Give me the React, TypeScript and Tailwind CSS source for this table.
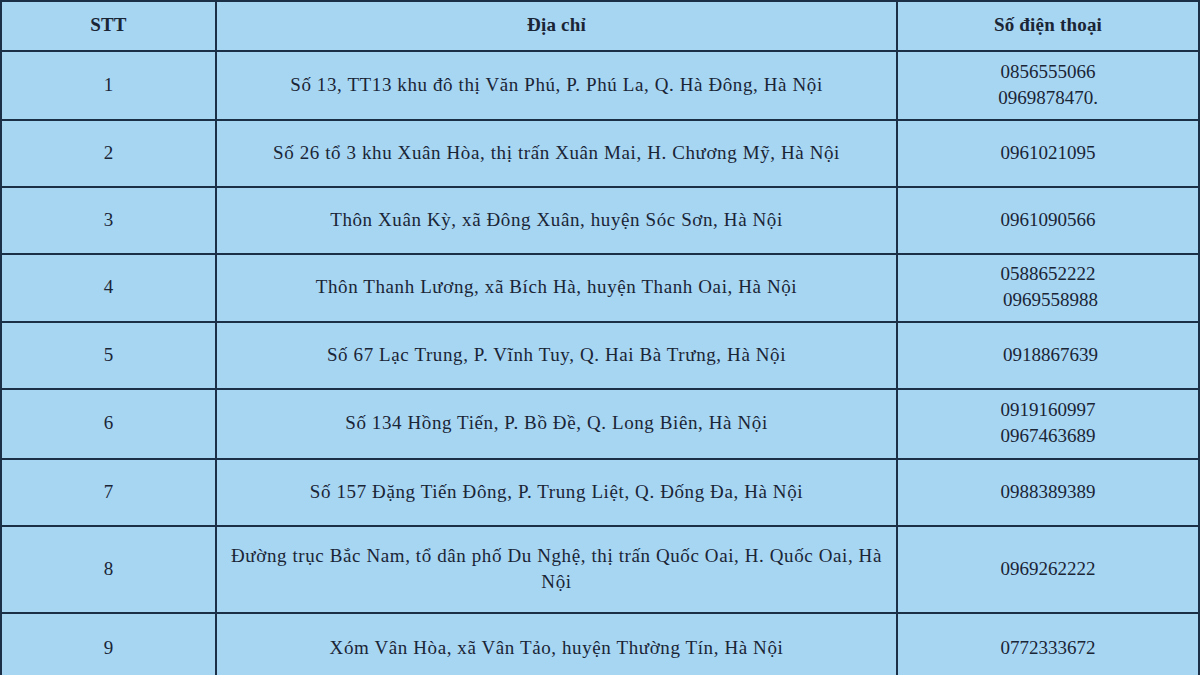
import React from "react";

const rows: { n: string; addr: React.ReactNode; phone: string[]; h: string }[] = [
  { n: "1", addr: "Số 13, TT13 khu đô thị Văn Phú, P. Phú La, Q. Hà Đông, Hà Nội", phone: ["0856555066", "0969878470."], h: "h-[69px]" },
  { n: "2", addr: "Số 26 tổ 3 khu Xuân Hòa, thị trấn Xuân Mai, H. Chương Mỹ, Hà Nội", phone: ["0961021095"], h: "h-[67px]" },
  { n: "3", addr: "Thôn Xuân Kỳ, xã Đông Xuân, huyện Sóc Sơn, Hà Nội", phone: ["0961090566"], h: "h-[67px]" },
  { n: "4", addr: "Thôn Thanh Lương, xã Bích Hà, huyện Thanh Oai, Hà Nội", phone: ["0588652222", "\u00a00969558988"], h: "h-[68px]" },
  { n: "5", addr: "Số 67 Lạc Trung, P. Vĩnh Tuy, Q. Hai Bà Trưng, Hà Nội", phone: ["\u00a00918867639"], h: "h-[67px]" },
  { n: "6", addr: "Số 134 Hồng Tiến, P. Bồ Đề, Q. Long Biên, Hà Nội", phone: ["0919160997", "0967463689"], h: "h-[70px]" },
  { n: "7", addr: "Số 157 Đặng Tiến Đông, P. Trung Liệt, Q. Đống Đa, Hà Nội", phone: ["0988389389"], h: "h-[67px]" },
  { n: "8", addr: "Đường trục Bắc Nam, tổ dân phố Du Nghệ, thị trấn Quốc Oai, H. Quốc Oai, Hà Nội", phone: ["0969262222"], h: "h-[87px]" },
  { n: "9", addr: "Xóm Vân Hòa, xã Vân Tảo, huyện Thường Tín, Hà Nội", phone: ["0772333672"], h: "h-[72px]" },
];

export default function App() {
  return (
    <div className="w-[1200px] h-[675px] overflow-hidden bg-[#a7d6f3] text-[#1a2536] text-[19px] leading-[26px]" style={{ fontFamily: '"Liberation Serif", "Times New Roman", serif' }}>
      <div className="flex flex-col border-l-2 border-r-2 border-t-2 border-[#1b3046] w-[1200px]">
        <div className="flex h-[50px] shrink-0 border-b-2 border-[#1b3046] font-bold tracking-[0.2px]">
          <div className="w-[215px] flex items-center justify-center border-r-2 border-[#1b3046] pb-[2px]">STT</div>
          <div className="w-[681px] flex items-center justify-center border-r-2 border-[#1b3046] pb-[2px]">Địa chỉ</div>
          <div className="flex-1 flex items-center justify-center pb-[2px]">Số điện thoại</div>
        </div>
        {rows.map((r) => (
          <div key={r.n} className={`flex ${r.h} border-b-2 border-[#1b3046] shrink-0`}>
            <div className="w-[215px] flex items-center justify-center border-r-2 border-[#1b3046] pb-[2px]">{r.n}</div>
            <div className="w-[681px] flex items-center justify-center text-center px-[12px] tracking-[0.6px] border-r-2 border-[#1b3046] pb-[2px]">{r.addr}</div>
            <div className="flex-1 flex flex-col items-center justify-center pb-[2px]">
              {r.phone.map((p) => (
                <div key={p}>{p}</div>
              ))}
            </div>
          </div>
        ))}
      </div>
    </div>
  );
}
